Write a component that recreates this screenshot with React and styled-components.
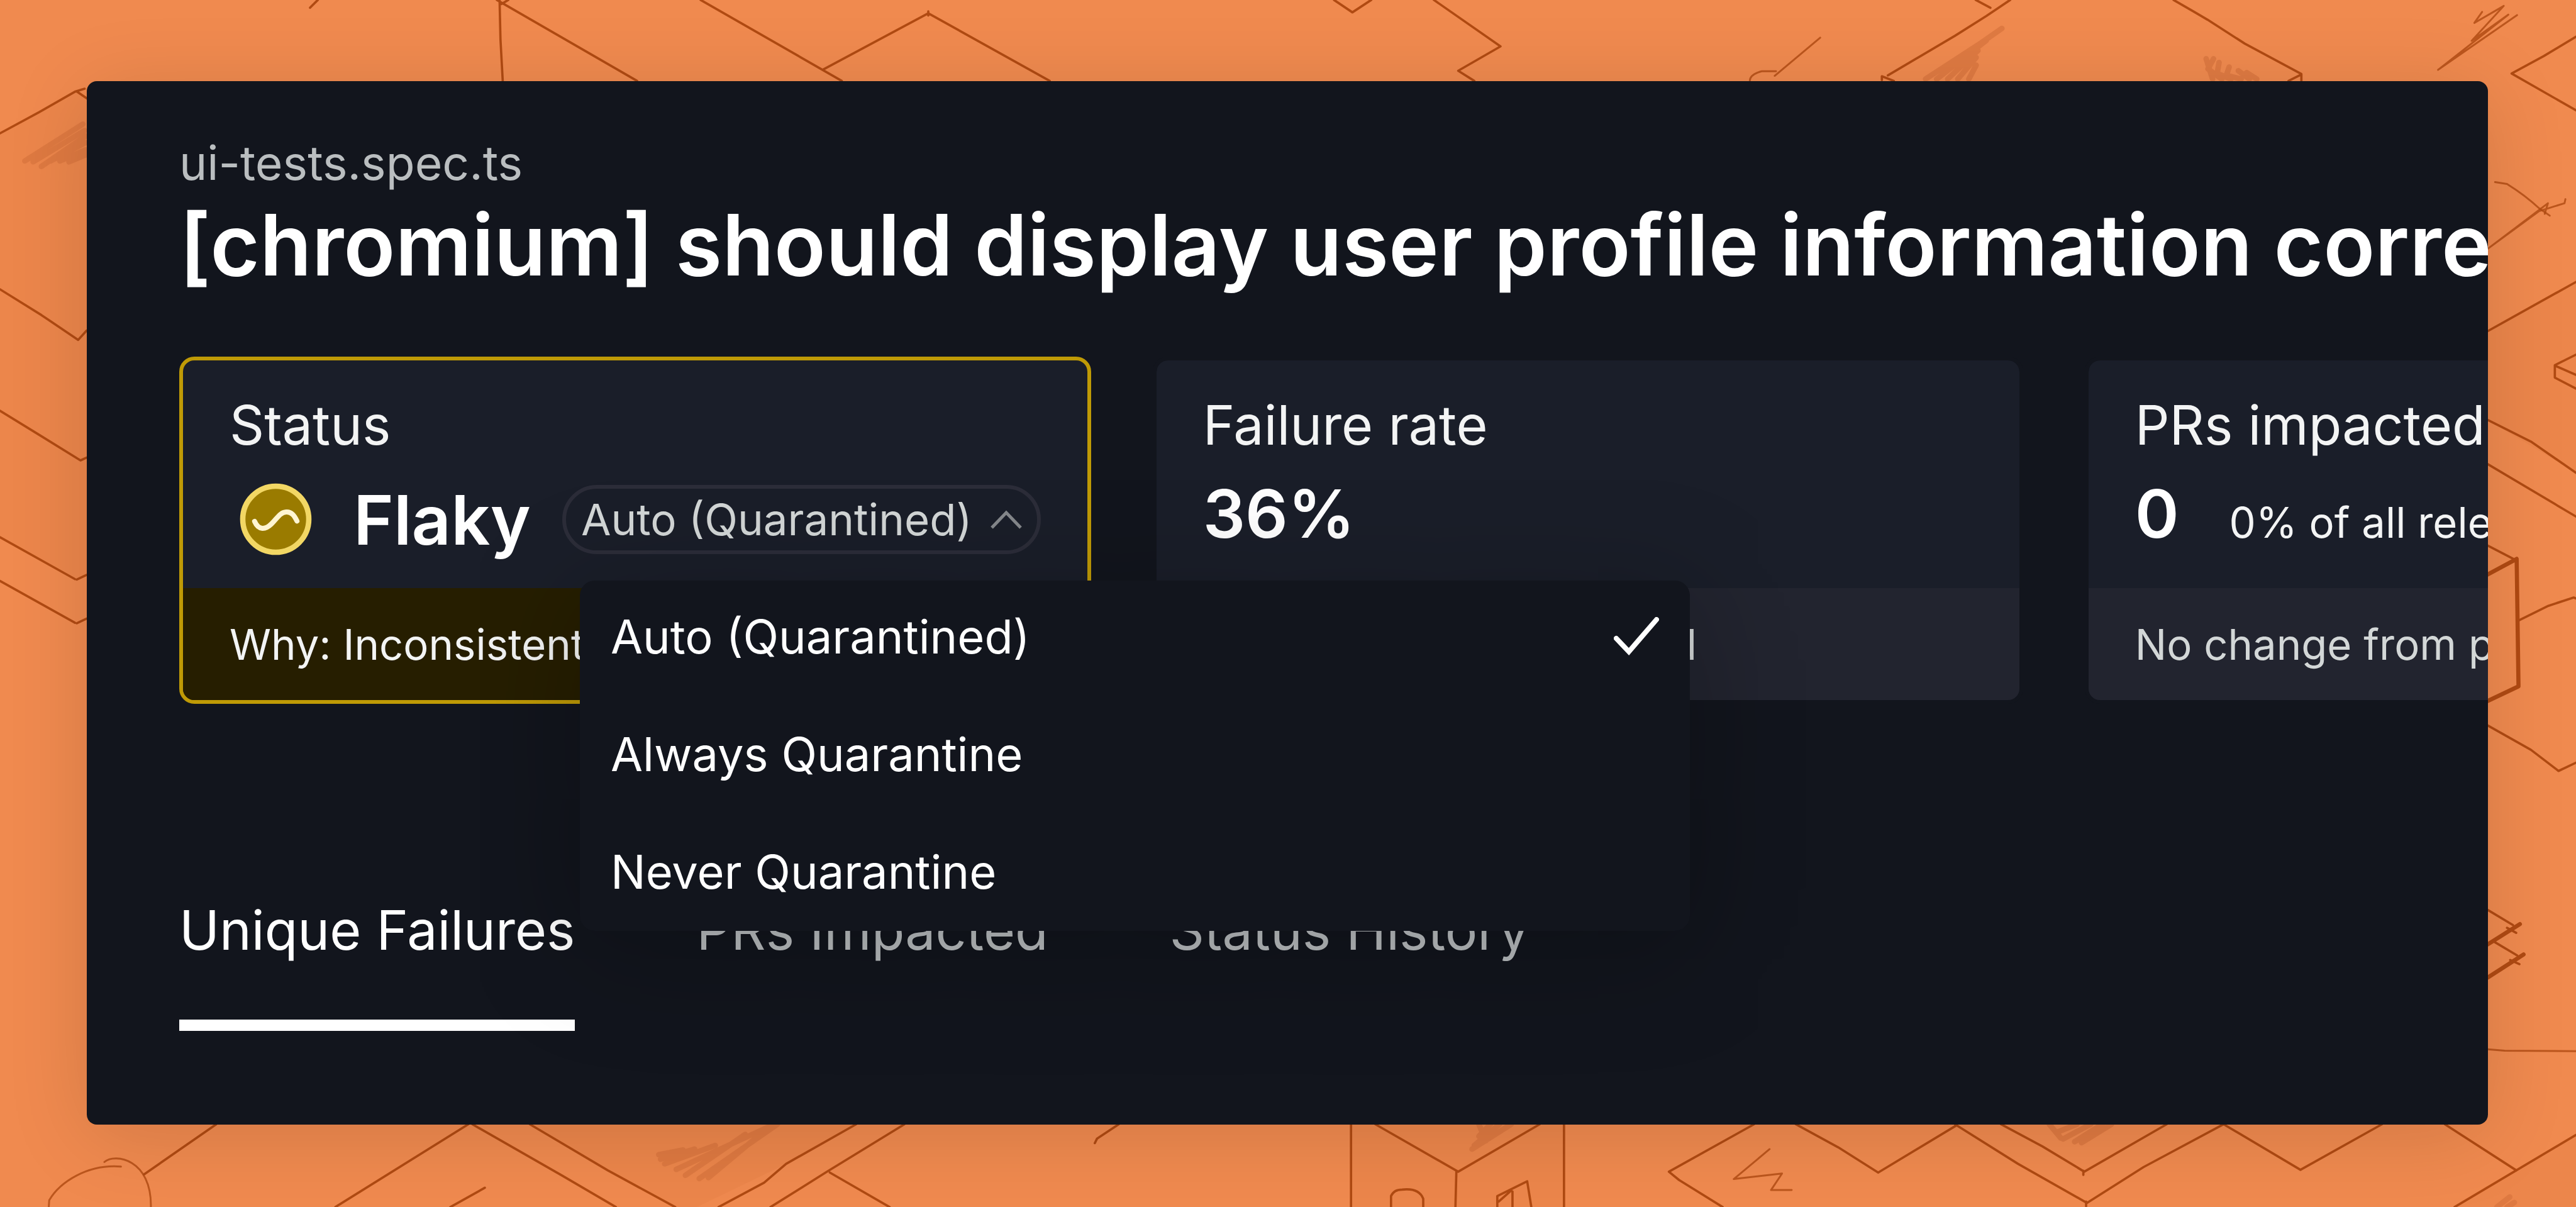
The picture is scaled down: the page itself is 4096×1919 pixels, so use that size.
import React, { useState } from "react";
import styled, { createGlobalStyle, css } from "styled-components";

const color = {
  canvas: "#f08a4f",
  ink: "#b04a12",
  hatch: "#dc7740",
  panel: "#12151d",
  card: "#1a1e29",
  cardFoot: "#22242f",
  warnFoot: "#261e00",
  warnEdge: "#bf9a06",
  pillEdge: "#2c2d39",
  text: "#ffffff",
  soft: "#f3f4f4",
  muted: "#d3d7d7",
  faint: "#babec0",
};

const GlobalStyle = createGlobalStyle`
  *, *::before, *::after { box-sizing: border-box; }
  body {
    margin: 0;
    background: ${color.canvas};
    color: ${color.text};
    font-family: Inter, "Liberation Sans", sans-serif;
    font-size: 67px;
  }
  button { font: inherit; color: inherit; background: none; border: 0; padding: 0; cursor: pointer; }
  h1, h2, p, ul { margin: 0; padding: 0; }
`;

const Page = styled.main`
  position: relative;
  display: flex;
  min-height: 100vh;
  padding: 129px 140px 131px 138px;
  overflow: hidden;
`;

const Backdrop = styled.svg`
  position: absolute;
  inset: 0;
  width: 100%;
  height: 100%;
  fill: none;
  stroke: ${color.ink};
  stroke-width: 5;
  stroke-linejoin: round;
  stroke-linecap: round;
`;

const Panel = styled.section`
  position: relative;
  flex: 1;
  min-width: 0;
  padding: 77px 0 148px 147px;
  overflow: hidden;
  border-radius: 16px;
  background: ${color.panel};
  box-shadow: 0 18px 130px rgba(0, 0, 0, 0.13);
`;

const FileName = styled.p`
  font-size: 75px;
  line-height: 106px;
  color: ${color.faint};
`;

const Title = styled.h1`
  font-size: 135px;
  line-height: 155px;
  font-weight: 600;
  white-space: nowrap;
`;

const Cards = styled.div`
  display: flex;
  gap: 98px;
  margin-top: 100px;
`;

const Card = styled.article`
  display: flex;
  flex: 0 0 auto;
  flex-direction: column;
  min-width: 1384px;
  border: 6px solid ${(p) => (p.$warn ? color.warnEdge : color.panel)};
  border-radius: 24px;
  background: ${color.card};
  background-clip: padding-box;
`;

const CardHead = styled.div`
  display: flex;
  flex: 1;
  flex-direction: column;
  gap: 16px;
  padding: 38px 74px 41px;
`;

const CardLabel = styled.h2`
  font-size: 86px;
  line-height: 130px;
  font-weight: 400;
  color: ${color.soft};
`;

const StatusRow = styled.div`
  display: flex;
  align-items: center;
  gap: 50px;
  white-space: nowrap;
`;

const ValueRow = styled.div`
  display: flex;
  align-items: baseline;
  gap: 80px;
  white-space: nowrap;
`;

const Value = styled.strong`
  font-size: ${(p) => (p.$name ? 109 : 106)}px;
  line-height: 120px;
  font-weight: 600;
`;

const Note = styled.span`
  color: ${color.soft};
`;

const CardFoot = styled.p`
  display: flex;
  align-items: center;
  height: 178px;
  padding: 0 74px;
  border-radius: 0 0 18px 18px;
  white-space: nowrap;
  color: ${(p) => (p.$warn ? color.soft : color.muted)};
  background: ${(p) => (p.$warn ? color.warnFoot : color.cardFoot)};
`;

const StatusIcon = styled.svg`
  flex: none;
  width: 137px;
  height: 137px;
  margin: 0 5px;
`;

const Picker = styled.div`
  position: relative;
`;

const Pill = styled.button`
  display: flex;
  align-items: center;
  gap: 29px;
  height: 110px;
  padding: 0 24px;
  border: 6px solid ${color.pillEdge};
  border-radius: 55px;
  font-size: 69px;
  color: ${color.muted};
`;

const Chevron = styled.svg`
  width: 50px;
  height: 30px;
  fill: none;
  stroke: #85888c;
  stroke-width: 5;
`;

const Menu = styled.ul`
  position: absolute;
  z-index: 2;
  top: 152px;
  left: 28px;
  display: flex;
  flex-direction: column;
  gap: 9px;
  width: 1765px;
  padding-bottom: 5px;
  list-style: none;
  border-radius: 24px;
  background: ${color.panel};
  box-shadow: 0 30px 190px rgba(0, 0, 0, 0.28);
`;

const MenuItem = styled.button`
  display: flex;
  align-items: center;
  justify-content: space-between;
  width: 100%;
  height: 178px;
  padding: 0 49px;
  font-size: 74px;
  text-align: left;
`;

const Tick = styled.svg`
  width: 72px;
  height: 62px;
  fill: none;
  stroke: currentColor;
  stroke-width: 8;
  stroke-linecap: round;
`;

const Tabs = styled.div`
  display: flex;
  gap: 193px;
  margin-top: 295px;
`;

const Tab = styled.button`
  padding-bottom: 77px;
  border-bottom: 18px solid transparent;
  font-size: 86px;
  line-height: 130px;
  color: ${color.faint};
  ${(p) =>
    p.$active &&
    css`
      color: ${color.text};
      border-bottom-color: ${color.text};
    `}
`;

const thinLines = [
  "M674 17L691 0",
  "M1086 0L1088 86L1093 178M1080 0L1385 176M1105 0L1090 9",
  "M1523 0L1830 176M1788 152L2018 29L2282 176M2018 25V34",
  "M2900 0L2940 27L2981 0",
  "M3117 0L3262 101L3170 154L3205 176",
  "M0 290L85 244L164 199L184 193M167 199L190 215",
  "M0 629L90 685L170 739L188 719",
  "M0 893L83 944L175 1001L188 995",
  "M0 1168L163 1259M167 1260L188 1250M0 1263L163 1354M167 1355L188 1345",
  "M313 2553L470 2444",
  "M1018 2444L729 2624M1027 2444L1221 2555L1339 2624M1152 2444L1321 2544L1468 2624",
  "M1861 2444L1709 2530L1661 2571L1562 2624M1966 2444L1798 2547L1675 2624M1804 2549L1934 2624",
  "M2432 2444L2385 2475L2380 2485M1054 2582L979 2624",
  "M2937 2444V2624M3400 2444V2624M2990 2444L3170 2547L3347 2444M3166 2547L3164 2624",
  "M3024 2624V2600Q3030 2586 3048 2586Q3085 2582 3094 2606V2624",
  "M3255 2624V2600L3320 2568L3329 2624M3288 2590V2624M3258 2612L3285 2588",
  "M3813 2444L3628 2547L3650 2565L3745 2624",
  "M3904 2444L3996 2494L4083 2549L4254 2446",
  "M4250 2444L4387 2530L4537 2615L4660 2537L4834 2444M4535 2612V2622",
  "M4350 2444L4440 2492L4531 2547L4710 2444M4529 2545V2554",
  "M4834 2444L5001 2543L5178 2444M5315 2444L5470 2544",
  "M5600 2467L5336 2624",
  "M4295 0L4327 17M4370 0L4318 35L4250 78L4104 164M4091 166L4117 176M4091 166V174",
  "M4725 0L4770 26L4799 43L4880 95L5003 161V176M5003 162L4975 176",
  "M5600 80L5530 122L5460 160L5600 240",
  "M5600 613L5408 720",
  "M5600 771L5554 794V821L5600 845M5554 795L5600 815",
  "M5408 913L5502 960L5600 1028M5408 1009L5600 1123",
  "M5408 1186L5468 1217M5475 1349L5540 1317L5595 1299L5600 1301",
  "M5408 1577L5502 1630L5562 1676L5600 1658",
  "M5408 1978L5463 2011M5420 2046L5472 2077M5450 2017L5470 2028M5457 2087L5477 2096",
];

const lightLines = [
  "M106 2624L107 2609C130 2570 190 2530 263 2536",
  "M227 2526C250 2506 330 2520 328 2624",
  "M3957 82L3858 165M3861 155H3830Q3804 162 3804 176",
  "M3847 2498L3769 2563L3874 2551L3850 2587L3895 2587",
  "M5396 26L5379 50L5443 13L5373 89L5453 32L5300 152L5472 33",
  "M5424 396L5450 400Q5490 425 5520 453L5543 469",
  "M5408 541L5539 442L5532 465M5577 433L5575 442L5520 459L5408 541",
  "M5408 2281L5445 2284L5600 2285",
];

const boldLines = [
  "M5408 1249L5471 1215L5475 1492L5408 1524",
  "M5408 2053L5478 2009M5408 2125L5486 2075",
];

const hatchLines = [
  "M54 350L180 270M72 352L184 284M90 362L186 296M110 350L186 310M130 350L186 326M150 352L188 336",
  "M1679 2444L1540 2560M1690 2444L1520 2562M1620 2466L1490 2555M1670 2450L1470 2542M1555 2490L1445 2530M1510 2498L1436 2520M1485 2500L1432 2510",
  "M4352 62L4300 98L4186 172M4318 88L4210 172M4300 110L4234 172M4296 125L4256 172M4296 142L4280 172",
  "M4796 128L4810 172M4812 128L4800 150L4830 172M4824 136L4820 160L4850 172M4846 146L4840 164L4872 172M4866 154L4890 172M4884 158L4906 172",
  "M3215 2444L3230 2480M3285 2444L3200 2498M3260 2444L3205 2490M3240 2444L3215 2470",
  "M4455 2444L4480 2474M4590 2444L4525 2484M4570 2444L4510 2482M4545 2444L4485 2476M4515 2444L4470 2462",
  "M5456 2602L5428 2624M5466 2614L5450 2624",
];

function Drawing() {
  return (
    <Backdrop viewBox="0 0 5600 2624" preserveAspectRatio="xMidYMid slice" aria-hidden="true">
      <g stroke="none" fill={color.ink} fillOpacity="0.05">
        <path d="M0 290L164 199L188 215V719L170 739L0 629Z" />
        <path d="M0 629L170 739L188 719V995L175 1001L0 893Z" />
        <path d="M0 893L175 1001L188 995V1250L163 1259L0 1168Z" />
        <path d="M1152 2444H1861L1709 2530L1515 2624H1468Z" />
        <path d="M2937 2444H3400V2624H2937Z" />
        <path d="M5600 613L5408 720V913L5600 1028Z" />
        <path d="M5600 2467L5336 2624H5600Z" />
      </g>
      <g stroke={color.hatch} strokeWidth="12" strokeOpacity="0.85">
        {hatchLines.map((d) => <path key={d} d={d} />)}
      </g>
      {thinLines.map((d) => <path key={d} d={d} />)}
      <g strokeOpacity="0.82" strokeWidth="4">
        {lightLines.map((d) => <path key={d} d={d} />)}
      </g>
      <g strokeWidth="9">
        {boldLines.map((d) => <path key={d} d={d} />)}
      </g>
    </Backdrop>
  );
}

const modes = ["Auto (Quarantined)", "Always Quarantine", "Never Quarantine"];

function ModePicker() {
  const [open, setOpen] = useState(true);
  const [mode, setMode] = useState(modes[0]);
  return (
    <Picker>
      <Pill type="button" aria-haspopup="menu" aria-expanded={open} onClick={() => setOpen(!open)}>
        {mode}
        <Chevron viewBox="0 0 50 30" aria-hidden="true">
          <path d="M2 28L25 4L48 28" />
        </Chevron>
      </Pill>
      {open && (
        <Menu role="menu">
          {modes.map((m) => (
            <li key={m} role="none">
              <MenuItem type="button" role="menuitemradio" aria-checked={m === mode} onClick={() => setMode(m)}>
                {m}
                {m === mode && (
                  <Tick viewBox="0 0 72 62" aria-hidden="true">
                    <path d="M4 34L24 55L68 4" />
                  </Tick>
                )}
              </MenuItem>
            </li>
          ))}
        </Menu>
      )}
    </Picker>
  );
}

const tabs = ["Unique Failures", "PRs Impacted", "Status History"];

export default function App() {
  const [tab, setTab] = useState(tabs[0]);
  return (
    <>
      <GlobalStyle />
      <Page>
        <Drawing />
        <Panel>
          <FileName>ui-tests.spec.ts</FileName>
          <Title>[chromium] should display user profile information correctly</Title>
          <Cards>
            <Card $warn>
              <CardHead>
                <CardLabel>Status</CardLabel>
                <StatusRow>
                  <StatusIcon viewBox="0 0 24 24" aria-hidden="true">
                    <circle cx="12" cy="12" r="9.2" fill="#9a7b00" stroke="#f2d764" strokeWidth="1.5" />
                    <path
                      d="M6.1 12.6C7.2 15.2 9.2 14.9 10.8 13.3C12.5 11.6 13.2 10.1 14.9 10C16.4 9.9 17.2 11 17.9 12.5"
                      fill="none"
                      stroke="#fff5d2"
                      strokeWidth="1.4"
                      strokeLinecap="round"
                    />
                  </StatusIcon>
                  <Value $name>Flaky</Value>
                  <ModePicker />
                </StatusRow>
              </CardHead>
              <CardFoot $warn>Why: Inconsistent results</CardFoot>
            </Card>
            <Card>
              <CardHead>
                <CardLabel>Failure rate</CardLabel>
                <ValueRow>
                  <Value>36%</Value>
                </ValueRow>
              </CardHead>
              <CardFoot>Up from 17% past period</CardFoot>
            </Card>
            <Card>
              <CardHead>
                <CardLabel>PRs impacted</CardLabel>
                <ValueRow>
                  <Value>0</Value>
                  <Note>0% of all relevant PRs</Note>
                </ValueRow>
              </CardHead>
              <CardFoot>No change from previous period</CardFoot>
            </Card>
          </Cards>
          <Tabs role="tablist">
            {tabs.map((t) => (
              <Tab key={t} type="button" role="tab" aria-selected={t === tab} $active={t === tab} onClick={() => setTab(t)}>
                {t}
              </Tab>
            ))}
          </Tabs>
        </Panel>
      </Page>
    </>
  );
}
